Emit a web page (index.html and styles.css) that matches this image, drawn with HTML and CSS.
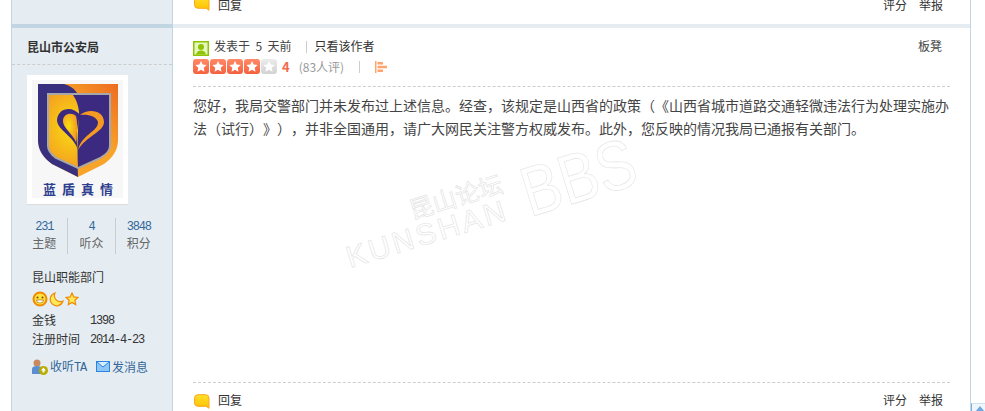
FILE: index.html
```html
<!DOCTYPE html>
<html lang="zh-CN">
<head>
    <meta charset="UTF-8">
    <title>昆山论坛</title>
    <link rel="stylesheet" href="styles.css">
</head>
<body>
    <div class="thread">
        <!-- tail of the previous post -->
        <div class="post post-prev">
            <div class="side"></div>
            <div class="main">
                <div class="foot foot-prev">
                    <a class="reply" href="#">
                        <svg class="bubble" viewBox="0 0 16 15"><defs><linearGradient id="bub" x1="0" y1="0" x2="0" y2="1"><stop offset="0" stop-color="#ffe02a"/><stop offset="1" stop-color="#ffbf00"/></linearGradient></defs><path d="M4 .7h7.500a3.500 3.500 0 0 1 3.500 3.500v10.100l-2.800-2H4A3.500 3.500 0 0 1 .5 8.800V4.200A3.500 3.500 0 0 1 4 .7z" fill="url(#bub)" stroke="#ffa51e"/></svg>
                        回复
                    </a>
                    <div class="foot-links"><a href="#">评分</a><a href="#">举报</a></div>
                </div>
            </div>
        </div>
        <div class="sep">
            <div class="sep-side"></div>
            <div class="sep-main"></div>
        </div>

        <div class="post">
            <div class="side">
                <div class="author">昆山市公安局</div>
                <div class="avatar">
                    <svg class="logo" viewBox="0 0 91 118">
                        <defs>
                            <radialGradient id="glow" cx="40%" cy="45%" r="60%"><stop offset="0" stop-color="#f8e010"/><stop offset="1" stop-color="#f59a22"/></radialGradient>
                            <linearGradient id="rim" x1="0" y1="1" x2="1" y2="0"><stop offset=".6" stop-color="#f7a428"/><stop offset="1" stop-color="#ee6a22"/></linearGradient>
                        </defs>
                        <rect width="91" height="118" fill="#f7f7f7"/>
                        <path d="M6 4H86V60Q86 74 72 84L46 97L20 84Q6 74 6 60Z" fill="url(#rim)"/>
                        <path d="M6 4H32Q48 8 48 26Q44 60 46 97L20 84Q6 74 6 60Z" fill="#38307f"/>
                        <path d="M16 14H78V66Q78 72 68 78L46 88L24 78Q16 72 16 66Z" fill="url(#glow)" stroke="#a8a8a8" stroke-width="2"/>
                        <path d="M41 15H77V66Q77 72 68 77L46 87C45 70 46 45 47 32Q46 22 41 15Z" fill="#3b2a80"/>
                        <path d="M46 70C42 56 25 50 25 40C26 28 40 25 48 35C44 50 44 60 46 70Z" fill="#3b2a80"/>
                        <path d="M44 62C40 53 30 47 31 40C32 33 40 32 44 36C46 44 45 54 44 62Z" fill="url(#glow)"/>
                        <path d="M46 70C50 54 66 52 66 42C64 36 56 34 48 35C56 28 72 30 72 42C72 52 54 56 46 70Z" fill="#f59a22"/>
                        <text class="logo-text" x="49" y="114" text-anchor="middle">蓝盾真情</text>
                    </svg>
                </div>
                <div class="stats">
                    <div class="stat"><a href="#">231</a><span>主题</span></div>
                    <div class="stat"><a href="#">4</a><span>听众</span></div>
                    <div class="stat"><a href="#">3848</a><span>积分</span></div>
                </div>
                <div class="group">昆山职能部门</div>
                <div class="medals">
                    <svg width="16" height="16" viewBox="0 0 16 16"><circle cx="8" cy="8" r="6.500" fill="#ffe23d" stroke="#f08a00" stroke-width="2"/><circle cx="5.500" cy="6.500" r="1" fill="#7a4a00"/><circle cx="10.500" cy="6.500" r="1" fill="#7a4a00"/><path d="M4.500 9h7a3.500 3 0 0 1-7 0z" fill="#fff" stroke="#a05a00" stroke-width=".6"/></svg>
                    <svg width="15" height="15" viewBox="0 0 15 15"><path d="M6 1a6.500 6.500 0 1 0 8 8A6 6 0 0 1 6 1z" fill="#ffe75a" stroke="#f08a00" stroke-width="1.200"/></svg>
                    <svg width="14" height="14" viewBox="0 0 14 14"><path d="M7 1l1.800 3.900 4.200.5-3.100 2.900.8 4.200L7 10.400 3.300 12.500l.8-4.200L1 5.400l4.200-.5z" fill="#ffe75a" stroke="#f08a00" stroke-width="1.200"/></svg>
                </div>
                <dl class="info">
                    <dt>金钱</dt><dd>1398</dd>
                    <dt>注册时间</dt><dd>2014-4-23</dd>
                </dl>
                <div class="actions">
                    <a href="#">
                        <svg width="16" height="16" viewBox="0 0 16 16"><circle cx="5" cy="4" r="3.500" fill="#c98a5e"/><path d="M0 15V10q0-3 5-3t5 3v5z" fill="#5b8fd0"/><circle cx="11.500" cy="11.500" r="4.500" fill="#b8ac00"/><path d="M11.500 8.500l2.500 3h-1.500v2h-2v-2H9z" fill="#fff"/></svg>
                        <span>收听<span class="ta">TA</span></span>
                    </a>
                    <a href="#">
                        <svg width="14" height="11" viewBox="0 0 14 11"><rect x=".5" y=".5" width="13" height="10" fill="#8ec6f5" stroke="#2a85e0"/><path d="M1 1l6 5 6-5" fill="#d8eeff" stroke="#2a85e0"/></svg>
                        发消息
                    </a>
                </div>
            </div>
            <div class="main">
                <div class="head">
                    <div class="head-row">
                        <div class="head-left">
                            <svg class="user-icon" viewBox="0 0 16 15"><rect width="16" height="15" fill="#8fc400"/><rect x="1.500" y="1.500" width="13" height="12" fill="#e6f6c0"/><circle cx="8" cy="6" r="3" fill="#8fc400"/><path d="M3 13.500q1-4 5-4t5 4z" fill="#8fc400"/></svg>
                            <span>发表于&nbsp; 5&nbsp; 天前</span>
                            <span class="pipe"></span>
                            <a href="#">只看该作者</a>
                        </div>
                        <span class="floor">板凳</span>
                    </div>
                    <div class="rate-row">
                        <div class="stars">
                            <i class="star"><svg viewBox="0 0 16 16"><path d="M8 2l1.800 3.900 4.200.5-3.100 2.900.8 4.200L8 11.400 4.300 13.500l.8-4.200L2 6.400l4.200-.5z" fill="#fff"/></svg></i>
                            <i class="star"><svg viewBox="0 0 16 16"><path d="M8 2l1.800 3.900 4.200.5-3.100 2.900.8 4.200L8 11.400 4.300 13.500l.8-4.200L2 6.400l4.200-.5z" fill="#fff"/></svg></i>
                            <i class="star"><svg viewBox="0 0 16 16"><path d="M8 2l1.800 3.900 4.200.5-3.100 2.900.8 4.200L8 11.400 4.300 13.500l.8-4.200L2 6.400l4.200-.5z" fill="#fff"/></svg></i>
                            <i class="star"><svg viewBox="0 0 16 16"><path d="M8 2l1.800 3.900 4.200.5-3.100 2.900.8 4.200L8 11.400 4.300 13.500l.8-4.200L2 6.400l4.200-.5z" fill="#fff"/></svg></i>
                            <i class="star star-off"><svg viewBox="0 0 16 16"><path d="M8 2l1.800 3.900 4.200.5-3.100 2.900.8 4.200L8 11.400 4.300 13.500l.8-4.200L2 6.400l4.200-.5z" fill="#fff"/></svg></i>
                        </div>
                        <b class="score">4</b>
                        <span class="count">(83人评)</span>
                        <span class="pipe pipe-rate"></span>
                        <svg class="bars" width="12" height="12" viewBox="0 0 12 12"><path d="M0 0h1.500v12H0zM2.500 1H8v2.500H2.500zM2.500 4.700H12v2.500H2.500zM2.500 8.400H8v2.500H2.500z" fill="#ffa46e"/></svg>
                    </div>
                </div>
                <div class="content">
                    <p>您好，我局交警部门并未发布过上述信息。经查，该规定是山西省的政策（《山西省城市道路交通轻微违法行为处理实施办法（试行）》），并非全国通用，请广大网民关注警方权威发布。此外，您反映的情况我局已通报有关部门。</p>
                    <div class="watermark">
                        <span class="wm-cn">昆山论坛</span>
                        <span class="wm-en">KUNSHAN</span>
                        <span class="wm-bbs">BBS</span>
                    </div>
                </div>
                <div class="foot">
                    <a class="reply" href="#">
                        <svg class="bubble" viewBox="0 0 16 15"><path d="M4 .7h7.500a3.500 3.500 0 0 1 3.500 3.500v10.100l-2.800-2H4A3.500 3.500 0 0 1 .5 8.800V4.200A3.500 3.500 0 0 1 4 .7z" fill="url(#bub)" stroke="#ffa51e"/></svg>
                        回复
                    </a>
                    <div class="foot-links"><a href="#">评分</a><a href="#">举报</a></div>
                </div>
            </div>
        </div>
    </div>
    <a class="to-top" href="#"></a>
</body>
</html>
```

FILE: styles.css
```css
* {
    margin: 0;
    padding: 0;
    box-sizing: border-box;
}
html, body {
    height: 411px;
    overflow: hidden;
    background: #fff;
}
body {
    font: 12px/16px "Noto Sans CJK SC", "Liberation Sans", sans-serif;
    color: #444;
    position: relative;
    text-spacing-trim: space-all;
}
a {
    color: #333;
    text-decoration: none;
}
.thread {
    width: 960px;
    margin-left: 11px;
    border-left: 1px solid #c2d5e3;
    border-right: 1px solid #c2d5e3;
}
.post {
    display: flex;
    height: 383px;
}
.post-prev {
    height: 24px;
}
.side {
    width: 161px;
    flex: none;
    background: #e5edf2;
    border-right: 1px solid #c2d5e3;
}
.main {
    flex: 1;
    padding: 0 20px;
    display: flex;
    flex-direction: column;
}
.sep {
    display: flex;
    height: 4px;
}
.sep-side {
    width: 161px;
    background: #c2d5e3;
}
.sep-main {
    flex: 1;
    background: #e5edf2;
}

/* left column */
.author {
    height: 37px;
    padding: 11px 0 0 15px;
    font-weight: bold;
    color: #333;
    border-bottom: 1px dashed #cdcdcd;
}
.avatar {
    width: 101px;
    height: 130px;
    margin: 10px 0 0 15px;
    padding: 5px 5px 6px;
    background: #fff;
    border-bottom: 1px solid #ddd;
}
.logo {
    display: block;
    width: 91px;
    height: 118px;
}
.logo-text {
    font-size: 13px;
    font-weight: bold;
    letter-spacing: 6px;
    fill: #2f3f8f;
}
.stats {
    display: flex;
    width: 141px;
    margin: 13px 0 0 9px;
}
.stat {
    flex: 1;
    height: 36px;
    text-align: center;
    border-left: 1px solid #cdcdcd;
}
.stat:first-child {
    border-left: none;
}
.stat a {
    display: block;
    height: 18px;
    font: 12px/18px "Liberation Mono", monospace;
    letter-spacing: -1.200px;
    color: #369;
}
.stat span {
    display: block;
    margin-top: -1px;
    line-height: 16px;
    color: #666;
}
.group {
    margin: 15px 0 0 20px;
    color: #333;
}
.medals {
    display: flex;
    align-items: center;
    gap: 1px;
    height: 16px;
    margin: 6px 0 0 20px;
}
.info {
    display: grid;
    grid-template-columns: 58px auto;
    grid-auto-rows: 19px;
    margin: 5px 0 0 20px;
    color: #333;
}
.info dt {
    line-height: 16px;
}
.info dd {
    font: 12px/19px "Liberation Mono", monospace;
    letter-spacing: -1.200px;
}
.actions {
    display: flex;
    gap: 10px;
    margin: 8px 0 0 20px;
}
.actions a {
    display: flex;
    align-items: center;
    gap: 2px;
    color: #369;
}
.ta {
    font: 12px "Liberation Mono", monospace;
    letter-spacing: -1.200px;
}

/* post body */
.head {
    padding-top: 11px;
    height: 59px;
    border-bottom: 1px dashed #cdcdcd;
}
.head-row {
    display: flex;
    justify-content: space-between;
    height: 20px;
    line-height: 14px;
    color: #444;
}
.head-left {
    display: flex;
    align-items: flex-start;
}
.user-icon {
    width: 16px;
    height: 15px;
    margin: 2px 5px 0 0;
}
.pipe {
    width: 1px;
    height: 12px;
    margin: 2px 7px 0 15px;
    background: #cdcdcd;
}
.floor {
    margin-right: 8px;
}
.rate-row {
    display: flex;
    align-items: center;
    height: 15px;
}
.stars {
    display: flex;
    gap: 1px;
}
.star {
    display: block;
    width: 16px;
    height: 15px;
    border-radius: 3px;
    background: linear-gradient(#ff8a68, #f5603e);
}
.star svg {
    display: block;
    width: 16px;
    height: 15px;
}
.star-off {
    background: linear-gradient(#ececec, #d2d2d2);
}
.score {
    margin-left: 5px;
    font-size: 13px;
    color: #f26c4f;
}
.count {
    margin-left: 9px;
    color: #999;
}
.pipe-rate {
    margin: 0 15px;
}
.content {
    flex: 1;
    position: relative;
    padding-top: 7px;
    font-size: 14px;
    line-height: 23px;
    color: #444;
}
/* origin sits on the baseline of KUNSHAN */
.watermark {
    position: absolute;
    left: 157px;
    top: 181px;
    color: transparent;
    -webkit-text-stroke: .6px #e2e2e2;
    transform: rotate(-17deg);
    transform-origin: 0 0;
}
.watermark span {
    position: absolute;
    white-space: nowrap;
}
.wm-cn {
    left: 74px;
    top: -50px;
    font-size: 24px;
    line-height: 24px;
}
.wm-en {
    left: 0;
    top: -25px;
    font: 30px/30px "Liberation Sans", sans-serif;
    letter-spacing: 3px;
}
.wm-bbs {
    left: 187px;
    top: -55px;
    font: 70px/70px "Liberation Sans", sans-serif;
    transform: scaleX(.83);
    transform-origin: 0 0;
}
.foot {
    display: flex;
    justify-content: space-between;
    height: 29px;
    padding-top: 10px;
    line-height: 14px;
    border-top: 1px dashed #cdcdcd;
}
.foot-prev {
    height: 24px;
    padding-top: 0;
    border-top: none;
    margin-top: -2px;
}
.reply {
    display: flex;
    align-items: flex-start;
    padding-left: 1px;
    gap: 8px;
}
.bubble {
    width: 16px;
    height: 15px;
    margin-top: 1px;
}
.foot-prev .bubble {
    margin-top: -2px;
}
.foot-links {
    display: flex;
    gap: 12px;
    margin-right: 7px;
}
.to-top {
    position: absolute;
    left: 971px;
    top: 403px;
    width: 14px;
    height: 8px;
    background: #eef5fb;
    border-left: 1px solid #7ab0e0;
    border-top: 1px solid #cfe2f3;
}
.to-top::after {
    content: "";
    position: absolute;
    left: 3px;
    top: 2px;
    border: 5px solid transparent;
    border-top: none;
    border-bottom: 6px solid #6fa8e0;
}
```
